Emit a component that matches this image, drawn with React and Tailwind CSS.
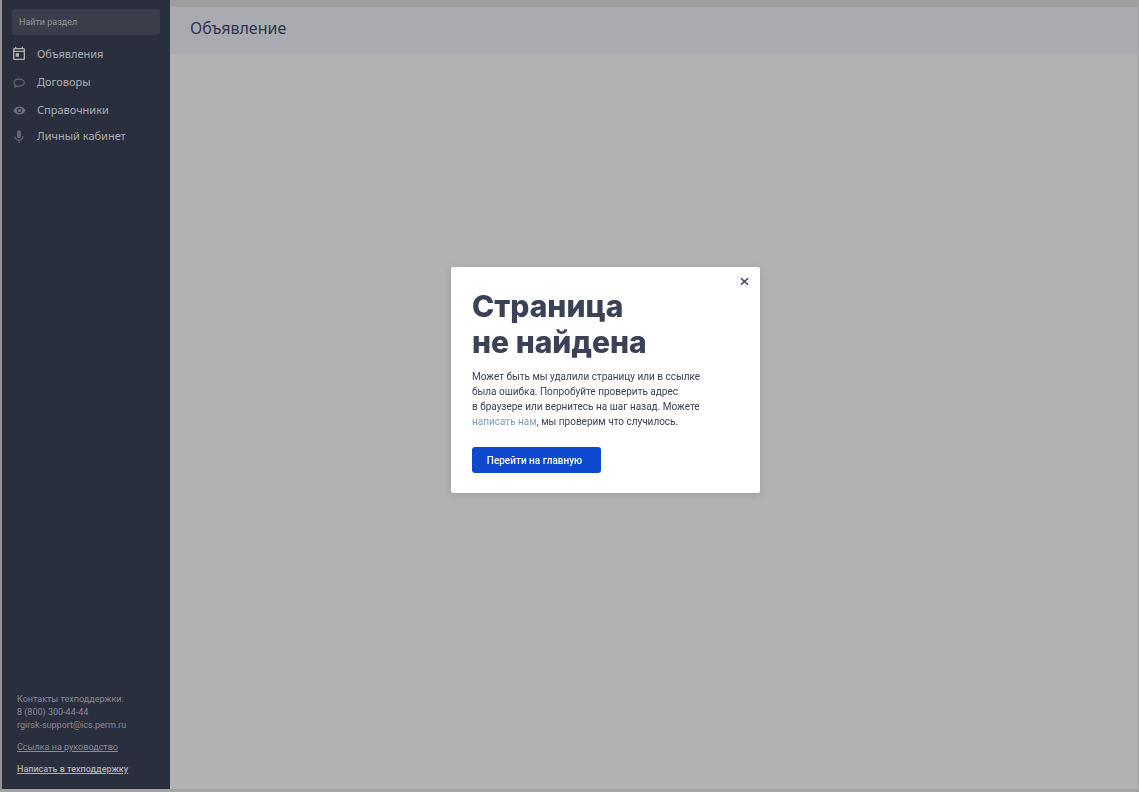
import React from "react";
import { MdOutlineToday, MdMic, MdRemoveRedEye } from "react-icons/md";

function BubbleIcon({ size }) {
  return (
    <svg width={size} height={size} viewBox="0 0 12 12" fill="none" stroke="currentColor" strokeWidth="1.3" strokeLinejoin="round" aria-hidden="true">
      <path d="M6.2 2C3.3 2 1 3.6 1 5.6c0 1 .5 1.900 1.400 2.500L1.700 10.200l2.600-1.300c.6.2 1.200.2 1.900.2 2.800 0 5.100-1.500 5.100-3.500S9 2 6.200 2Z" />
    </svg>
  );
}

const navItems = [
  { label: "Объявления", Icon: MdOutlineToday, size: 16, row: "h-7", tone: "text-[#b0b1b3]" },
  { label: "Договоры", Icon: BubbleIcon, size: 12, row: "h-[29px]", tone: "text-[#5f636c]" },
  { label: "Справочники", Icon: MdRemoveRedEye, size: 13, row: "h-[27px]", tone: "text-[#6e727a]" },
  { label: "Личный кабинет", Icon: MdMic, size: 16, row: "h-[25px]", tone: "text-[#63676f]" },
];

function Sidebar() {
  return (
    <aside className="flex w-[168px] shrink-0 flex-col bg-[#2a2f3d] font-['Noto_Sans',sans-serif]">
      <div className="pt-[9px] pr-[10px] pl-[10px]">
        <input
          type="search"
          aria-label="Найти раздел"
          placeholder="Найти раздел"
          className="block h-[26px] w-full rounded-[3px] bg-[#3a3e4a] px-[7px] font-['Roboto',sans-serif] text-[9px] text-[#a0a2a7] outline-none placeholder:text-[#95979c]"
        />
      </div>
      <nav className="mt-[5px]">
        <ul>
          {navItems.map(({ label, Icon, size, row, tone }) => (
            <li key={label}>
              <a href="#" className={`flex items-center text-[11px] text-[#acadb0] ${row}`}>
                <span className={`ml-[9px] flex w-4 justify-center ${tone}`}>
                  <Icon size={size} aria-hidden="true" />
                </span>
                <span className="ml-[10px]">{label}</span>
              </a>
            </li>
          ))}
        </ul>
      </nav>
      <footer className="mt-auto px-[15px] pb-[13px] font-['Roboto',sans-serif] text-[9px] leading-[13px] text-[#898c93]">
        <p>Контакты техподдержки:</p>
        <p>8 (800) 300-44-44</p>
        <p>rgirsk-support@ics.perm.ru</p>
        <a href="#" className="mt-[9px] block underline">Ссылка на руководство</a>
        <a href="#" className="mt-[9px] block font-medium text-[#b0b1b4] underline">Написать в техподдержку</a>
      </footer>
    </aside>
  );
}

function NotFoundDialog() {
  return (
    <div className="fixed inset-0 flex items-center justify-center pb-8 pl-[72px]">
      <section
        role="dialog"
        aria-modal="true"
        aria-labelledby="dialog-title"
        className="relative w-[309px] rounded-[2px] bg-white px-[21px] pt-[21px] pb-5 font-['Inter',sans-serif] text-[#3b4257] shadow-[0_2px_8px_rgba(0,0,0,0.12)]"
      >
        <button type="button" aria-label="Закрыть" className="absolute top-[10px] right-[11px] p-0">
          <svg width="9" height="9" viewBox="0 0 9 9" fill="none" stroke="currentColor" strokeWidth="1.5" aria-hidden="true">
            <path d="M1 1.2 8 7.8M8 1.2 1 7.8" />
          </svg>
        </button>
        <h2 id="dialog-title" className="text-[30px] leading-9 font-extrabold">
          Страница
          <br />
          не найдена
        </h2>
        <p className="mt-[9px] font-['Roboto',sans-serif] text-[10px] leading-[15px] whitespace-nowrap">
          Может быть мы удалили страницу или в ссылке
          <br />
          была ошибка. Попробуйте проверить адрес
          <br />
          в браузере или вернитесь на шаг назад. Можете
          <br />
          <a href="#" className="text-[#7c9fbb]">написать нам</a>, мы проверим что случилось.
        </p>
        <button type="button" className="mt-[18px] block h-[26px] w-[129px] rounded-[3px] bg-[#0d48cf] pr-1 font-['Roboto',sans-serif] text-[10px] font-medium whitespace-nowrap text-white">
          Перейти на главную
        </button>
      </section>
    </div>
  );
}

export default function App() {
  return (
    <div className="flex min-h-screen border-r border-b-[3px] border-l-2 border-r-[#a3a3a3] border-b-[#a3a3a3] border-l-[#929292] bg-[#b2b2b2]">
      <Sidebar />
      <main className="min-w-0 flex-1">
        <div className="h-[7px] bg-[#9f9f9f]" />
        <header className="flex h-[47px] items-center bg-[#a9abb0] px-5 pb-[5px]">
          <h1 className="font-['Noto_Sans',sans-serif] text-base text-[#30364a]">Объявление</h1>
        </header>
      </main>
      <NotFoundDialog />
    </div>
  );
}
